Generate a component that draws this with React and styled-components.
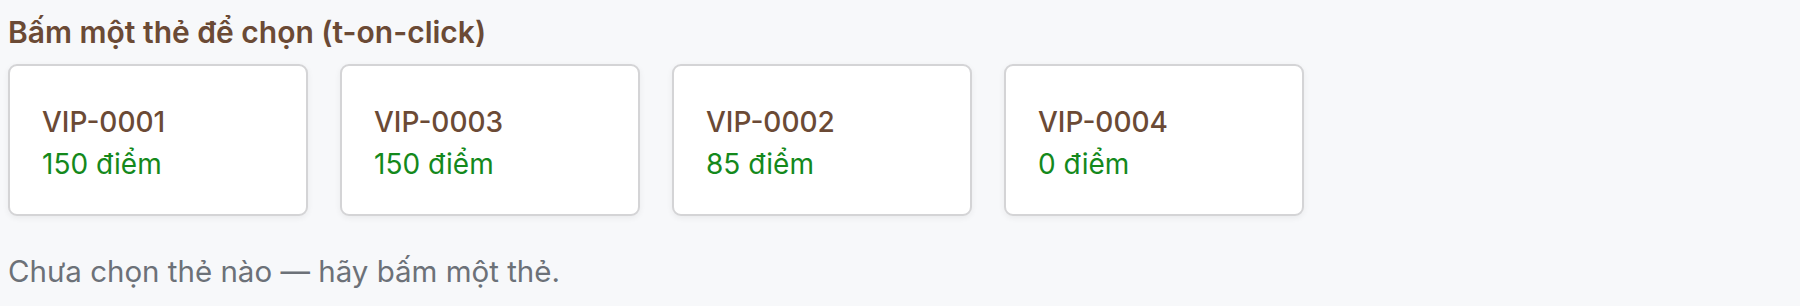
import React from 'react'
import styled, { createGlobalStyle } from 'styled-components'

const Global = createGlobalStyle`
  html, body {
    margin: 0;
    background: #f7f8fa;
  }
  body {
    font-family: Inter, "Noto Sans", "Liberation Sans", sans-serif;
  }
`

const Page = styled.main`
  display: flex;
  flex-flow: column nowrap;
  align-items: flex-start;
  padding: 14px 8px;
`

const Title = styled.h2`
  margin: 0 0 14px 0;
  font-size: 30px;
  line-height: 36px;
  font-weight: 600;
  color: #6b4a35;
`

const CardRow = styled.div`
  display: flex;
  flex-flow: row wrap;
  gap: 32px;
`

const Card = styled.button`
  display: flex;
  flex-flow: column nowrap;
  justify-content: center;
  align-items: flex-start;
  gap: 4px;
  box-sizing: border-box;
  width: 300px;
  height: 152px;
  padding: 5px 32px 0;
  background: #fff;
  border: 2px solid #d4d4d6;
  border-radius: 9px;
  box-shadow: 0 2px 6px rgba(0, 0, 0, 0.06);
  font-family: inherit;
  text-align: left;
  cursor: pointer;
`

const CardId = styled.span`
  font-size: 28px;
  line-height: 38px;
  font-weight: 500;
  color: #6b4a35;
`

const Points = styled.span`
  font-size: 28px;
  line-height: 38px;
  color: #14891c;
`

const Hint = styled.p`
  margin: 37px 0 0 0;
  font-size: 29.5px;
  line-height: 36px;
  color: #6c7178;
`

const cards = [
  { id: 'VIP-0001', points: 150 },
  { id: 'VIP-0003', points: 150 },
  { id: 'VIP-0002', points: 85 },
  { id: 'VIP-0004', points: 0 },
]

const App = () => (
  <Page>
    <Global />
    <Title>Bấm một thẻ để chọn (t-on-click)</Title>
    <CardRow>
      {cards.map(c => (
        <Card key={c.id} type='button'>
          <CardId>{c.id}</CardId>
          <Points>{c.points} điểm</Points>
        </Card>
      ))}
    </CardRow>
    <Hint>Chưa chọn thẻ nào — hãy bấm một thẻ.</Hint>
  </Page>
)

export default App
